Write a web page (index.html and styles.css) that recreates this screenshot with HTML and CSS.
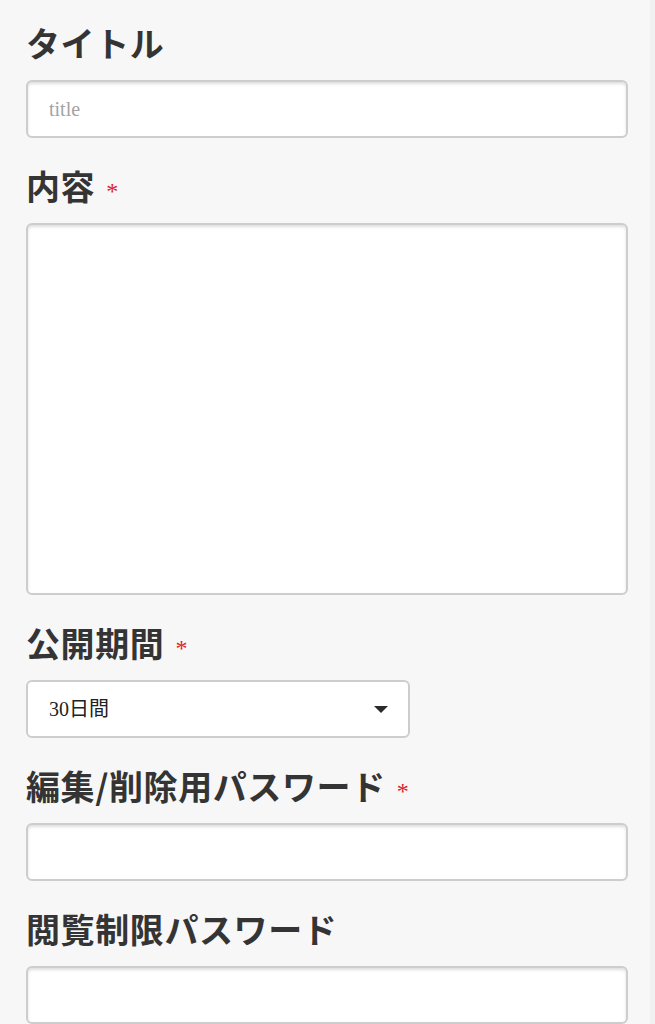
FILE: index.html
```html
<!DOCTYPE html>
<html lang="ja">
<head>
<meta charset="utf-8">
<title>投稿フォーム</title>
<link rel="stylesheet" href="styles.css">
</head>
<body>
<form class="page">
  <div class="group">
    <label class="label" for="title">タイトル</label>
    <input class="field" id="title" type="text" placeholder="title">
  </div>
  <div class="group">
    <label class="label" for="body">内容<span class="req">*</span></label>
    <textarea class="field area" id="body"></textarea>
  </div>
  <div class="group">
    <label class="label" for="period">公開期間<span class="req">*</span></label>
    <div class="select-wrap">
      <select class="field select" id="period">
        <option>30日間</option>
        <option>7日間</option>
        <option>1日間</option>
      </select>
    </div>
  </div>
  <div class="group">
    <label class="label" for="editpw">編集/削除用パスワード<span class="req">*</span></label>
    <input class="field" id="editpw" type="password">
  </div>
  <div class="group">
    <label class="label" for="viewpw">閲覧制限パスワード</label>
    <input class="field" id="viewpw" type="password">
  </div>
</form>
</body>
</html>
```

FILE: styles.css
```css
html {
  background: #f1f1f1;
}
body {
  margin: 0;
  background: #f1f1f1;
}
.page {
  width: 650px;
  box-sizing: border-box;
  min-height: 1024px;
  background: #f7f7f7;
  padding: 19px 24px 0 26px;
  display: flex;
  flex-direction: column;
  gap: 24px;
}
.group {
  display: flex;
  flex-direction: column;
  align-items: flex-start;
}
.label {
  display: block;
  font-family: "Noto Sans CJK JP", "Noto Sans", sans-serif;
  font-weight: 700;
  font-size: 34px;
  letter-spacing: 0.6px;
  line-height: 48px;
  height: 48px;
  color: #343434;
  margin-bottom: 13px;
  white-space: nowrap;
}
.req {
  display: inline-block;
  font-family: "Liberation Serif", serif;
  font-weight: 400;
  font-size: 24px;
  line-height: 1;
  color: #e0202a;
  margin-left: 11px;
  vertical-align: 1px;
}
.field {
  display: block;
  box-sizing: border-box;
  width: 602px;
  height: 58px;
  margin: 0;
  border: 2px solid #cdcdcd;
  border-radius: 6px;
  background: #ffffff;
  box-shadow: inset 0 2px 3px rgba(0, 0, 0, 0.13);
  padding: 0 21px;
  font-family: "Liberation Serif", "Noto Sans CJK JP", serif;
  font-size: 20px;
  color: #222222;
  outline: none;
}
.field::placeholder {
  color: #a3a3a3;
}
.area {
  height: 372px;
  resize: none;
  padding: 14px 21px;
}
.select-wrap {
  position: relative;
  width: 384px;
}
.select {
  width: 384px;
  -webkit-appearance: none;
  appearance: none;
  box-shadow: none;
  font-family: "Liberation Serif", "Noto Sans CJK JP", serif;
  color: #222222;
}
.select-wrap::after {
  content: "";
  position: absolute;
  right: 22px;
  top: 26px;
  width: 0;
  height: 0;
  border-left: 7px solid transparent;
  border-right: 7px solid transparent;
  border-top: 7px solid #2a2a2a;
  pointer-events: none;
}
```
